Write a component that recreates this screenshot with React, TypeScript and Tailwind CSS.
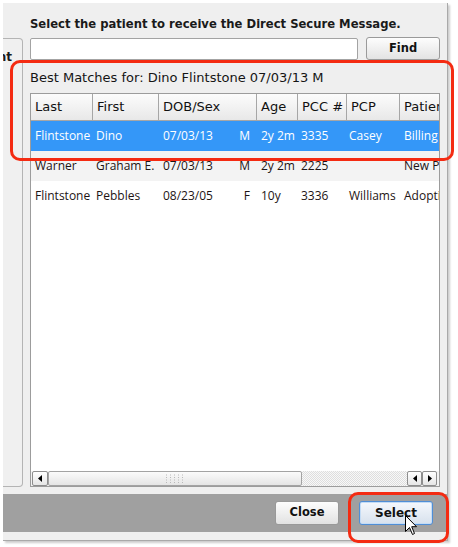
import React from 'react';

const cols = [
  { label: 'Last', w: 'w-[62px]' },
  { label: 'First', w: 'w-[66px]' },
  { label: 'DOB/Sex', w: 'w-[98px]' },
  { label: 'Age', w: 'w-[41px]' },
  { label: 'PCC #', w: 'w-[49px]' },
  { label: 'PCP', w: 'w-[53px]' },
  { label: 'Patient Type', w: 'w-[90px]' },
];

const rows = [
  { last: 'Flintstone', first: 'Dino', dob: '07/03/13', sex: 'M', age: '2y 2m', pcc: '3335', pcp: 'Casey', type: 'Billing Hold', selected: true },
  { last: 'Warner', first: 'Graham E.', dob: '07/03/13', sex: 'M', age: '2y 2m', pcc: '2225', pcp: '', type: 'New Patient', alt: true },
  { last: 'Flintstone', first: 'Pebbles', dob: '08/23/05', sex: 'F', age: '10y', pcc: '3336', pcp: 'Williams', type: 'Adoption' },
];

function Arrow({ dir }: { dir: 'left' | 'right' }) {
  return (
    <svg width="4" height="7" viewBox="0 0 4 7">
      {dir === 'left' ? <path d="M4 0 L0 3.5 L4 7 Z" fill="#000" /> : <path d="M0 0 L4 3.5 L0 7 Z" fill="#000" />}
    </svg>
  );
}

function ScrollButton({ dir, className }: { dir: 'left' | 'right'; className?: string }) {
  return (
    <div className={`flex items-center justify-center border border-[#8e8e8e] rounded-[2px] bg-linear-to-b from-[#ffffff] to-[#e6e6e6] ${className}`}>
      <Arrow dir={dir} />
    </div>
  );
}

function Grip() {
  const dots = [];
  for (let c = 0; c < 5; c++) {
    for (let r = 0; r < 4; r++) {
      dots.push(<rect key={`${c}-${r}`} x={c * 4 + 1} y={r * 2.5 + 0.5} width="1" height="1" fill="#b9b9b9" />);
    }
  }
  return (
    <svg width="20" height="10" viewBox="0 0 20 10">
      {dots}
    </svg>
  );
}

function ResultsTable() {
  return (
    <div className="mt-[6px] flex-1 min-h-0 flex flex-col overflow-hidden border border-[#9c9c9c] bg-white font-['DejaVu_Sans',sans-serif]">
      <div className="flex h-[27px] shrink-0">
        {cols.map((c) => (
          <div
            key={c.label}
            className={`${c.w} shrink-0 flex items-center pl-[4px] border-r border-b border-[#a6a6a6] bg-linear-to-b from-[#fcfcfc] to-[#e8e8e8] text-[13px] text-[#111] whitespace-nowrap overflow-hidden`}
          >
            {c.label}
          </div>
        ))}
      </div>
      {rows.map((r) => (
        <div
          key={r.first}
          className={`flex h-[30px] shrink-0 items-center font-['Open_Sans',sans-serif] text-[12px] whitespace-nowrap ${r.selected ? 'bg-[#3497f8] text-white' : r.alt ? 'bg-[#f3f3f3] text-[#1e1414]' : 'bg-white text-[#1e1414]'}`}
        >
          <div className="w-[62px] shrink-0 pl-[4px] overflow-hidden">{r.last}</div>
          <div className="w-[66px] shrink-0 pl-[3px] overflow-hidden">{r.first}</div>
          <div className="w-[98px] shrink-0 pl-[4px] pr-[7px] flex justify-between">
            <span>{r.dob}</span>
            <span>{r.sex}</span>
          </div>
          <div className="w-[41px] shrink-0 pl-[4px]">{r.age}</div>
          <div className="w-[49px] shrink-0 pl-[3px]">{r.pcc}</div>
          <div className="w-[53px] shrink-0 pl-[2px]">{r.pcp}</div>
          <div className="w-[90px] shrink-0 pl-[4px]">{r.type}</div>
        </div>
      ))}
      <div className="flex-1" />
      <div className="h-[15px] shrink-0 flex bg-[#f2f2f2]">
        <ScrollButton dir="left" className="ml-[1px] w-[16px]" />
        <div className="w-[254px] flex items-center justify-center border border-[#a3a3a3] rounded-[2px] bg-linear-to-b from-[#fbfbfb] to-[#e5e5e5]">
          <Grip />
        </div>
        <div className="flex-1 bg-[repeating-conic-gradient(#dedede_0_25%,#f8f8f8_0_50%)] bg-[length:2px_2px]" />
        <ScrollButton dir="left" className="w-[15px]" />
        <ScrollButton dir="right" className="w-[15px] mr-[2px]" />
      </div>
    </div>
  );
}

export default function App() {
  return (
    <div className="relative w-[458px] h-[547px] bg-white overflow-hidden font-['DejaVu_Sans',sans-serif]">
      <div className="ml-[3px] mt-[3px] w-[445px] h-[538px] flex flex-col bg-[#efefef] border-r border-b border-[#a9a9a9] shadow-[2px_2px_2px_rgba(0,0,0,0.2)]">
        <div className="flex flex-1 min-h-0">
          <div className="mt-[35px] w-[20px] flex justify-end overflow-hidden border-t border-r border-b border-[#b4b4b4] rounded-r-[4px] bg-[#f0f0f0]">
            <span className="pt-[10px] pr-[10px] whitespace-nowrap text-[12px] leading-[16px] font-bold text-[#1a1a1a]">Patient</span>
          </div>
          <div className="ml-[7px] w-[410px] flex flex-col">
            <div className="mt-[13px] h-[16px] leading-[16px] text-[11.6px] font-bold text-[#1a1a1a] whitespace-nowrap">
              Select the patient to receive the Direct Secure Message.
            </div>
            <div className="mt-[5px] h-[23px] flex">
              <input
                readOnly
                className="mt-[1px] h-[22px] w-[328px] border border-[#a3a3a3] rounded-[2px] bg-white outline-none"
              />
              <button className="ml-[8px] w-[74px] h-[23px] border border-[#9a9a9a] rounded-[3px] bg-linear-to-b from-[#fdfdfd] to-[#e3e3e3] text-[11.5px] font-bold text-[#111]">
                Find
              </button>
            </div>
            <div className="mt-[9px] h-[18px] leading-[18px] text-[13px] text-[#151515] whitespace-nowrap">
              Best Matches for: Dino Flintstone 07/03/13 M
            </div>
            <ResultsTable />
          </div>
        </div>
        <div className="h-[7px] shrink-0" />
        <div className="h-[38px] shrink-0 bg-[#a0a0a0] flex items-center justify-end gap-[20px] pr-[14px]">
          <button className="w-[64px] h-[24px] border border-[#999] rounded-[3px] bg-linear-to-b from-[#fdfdfd] to-[#e2e2e2] text-[11.5px] font-bold text-[#111]">
            Close
          </button>
          <button className="w-[74px] h-[24px] border border-[#4f8ed6] rounded-[3px] shadow-[inset_0_0_0_1px_#c4dcf5] bg-linear-to-b from-[#f5f8fc] to-[#d7e1ed] text-[12px] font-bold text-[#111]">
            Select
          </button>
        </div>
        <div className="h-[8px] shrink-0" />
      </div>

      <div className="absolute left-[10px] top-[60px] w-[444px] h-[101px] border-[3px] border-[#f42b12] rounded-[10px]" />
      <div className="absolute left-[348px] top-[492px] w-[101px] h-[51px] border-[3px] border-[#f42b12] rounded-[10px]" />

      <svg className="absolute left-[405px] top-[515px]" width="13" height="21" viewBox="0 0 13 21">
        <path d="M0.5 0.5 L0.5 16.5 L4.5 12.5 L7.5 19.5 L9.5 18.5 L6.7 11.7 L11.5 11.7 Z" fill="#fff" stroke="#000" strokeWidth="1" strokeLinejoin="miter" />
      </svg>
    </div>
  );
}
